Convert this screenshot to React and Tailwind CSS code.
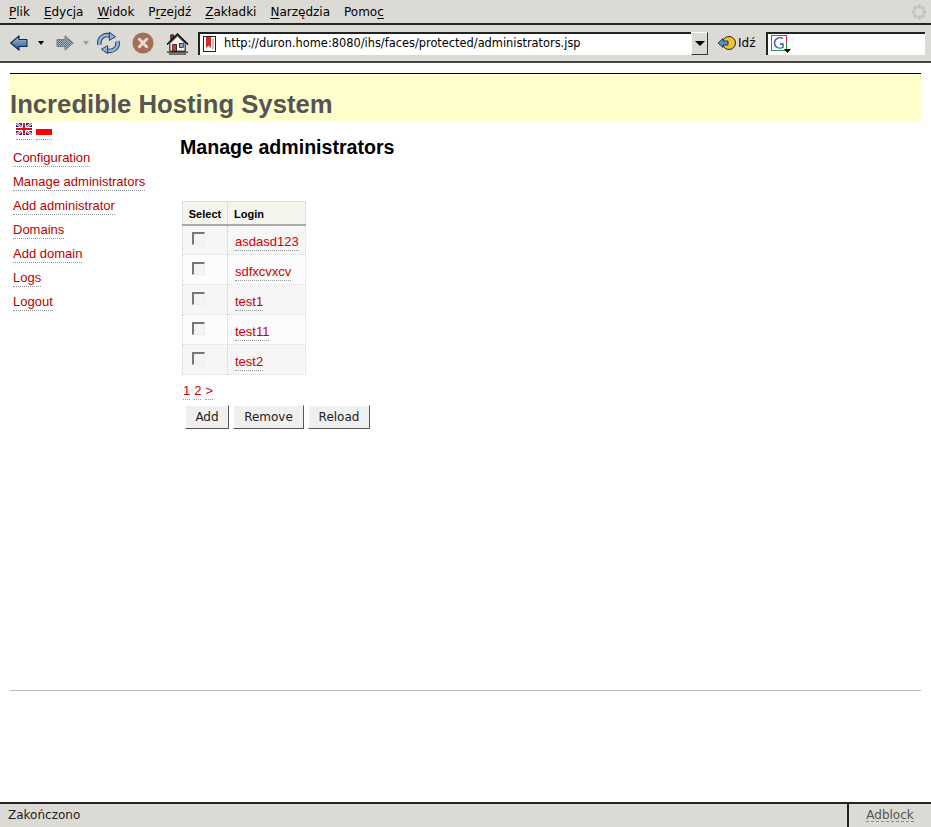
import React from "react";

const uiFont = "font-['DejaVu_Sans',sans-serif]";
const pageFont = "font-['Liberation_Sans',sans-serif]";

const menu = [
  ["P", "lik"],
  ["E", "dycja"],
  ["W", "idok"],
  ["", "P", "rzejdź"],
  ["Z", "akładki"],
  ["N", "arzędzia"],
  ["", "Pomo", "c"],
];

const sideLinks = [
  "Configuration",
  "Manage administrators",
  "Add administrator",
  "Domains",
  "Add domain",
  "Logs",
  "Logout",
];

const logins = ["asdasd123", "sdfxcvxcv", "test1", "test11", "test2"];

function MenuItem({ parts }) {
  if (parts.length === 2) {
    return (
      <span>
        <span className="underline underline-offset-2">{parts[0]}</span>
        {parts[1]}
      </span>
    );
  }
  if (parts[1] === "P") {
    return (
      <span>
        P<span className="underline underline-offset-2">r</span>zejdź
      </span>
    );
  }
  return (
    <span>
      {parts[1]}
      <span className="underline underline-offset-2">{parts[2]}</span>
    </span>
  );
}

function BackIcon() {
  return (
    <svg width="18" height="16" viewBox="0 0 18 16" className="shrink-0">
      <defs>
        <linearGradient id="back" x1="0" y1="0" x2="0" y2="1">
          <stop offset="0" stopColor="#a9c6e4" />
          <stop offset="1" stopColor="#20548c" />
        </linearGradient>
      </defs>
      <path d="M0.7 8 L9 0.8 V4.5 H17 V11.5 H9 V15.2 Z" fill="url(#back)" stroke="#0b2a4c" strokeWidth="1.1" strokeLinejoin="round" />
    </svg>
  );
}

function ForwardIcon() {
  return (
    <svg width="18" height="16" viewBox="0 0 18 16" className="shrink-0">
      <defs>
        <pattern id="dither" width="2" height="2" patternUnits="userSpaceOnUse">
          <rect width="2" height="2" fill="#a9b4c2" />
          <rect width="1" height="1" fill="#5f6c7c" />
          <rect x="1" y="1" width="1" height="1" fill="#5f6c7c" />
        </pattern>
      </defs>
      <path d="M17.3 8 L9 0.8 V4.5 H1 V11.5 H9 V15.2 Z" fill="url(#dither)" stroke="#77808c" strokeWidth="1" strokeLinejoin="round" />
    </svg>
  );
}

function ReloadIcon() {
  return (
    <svg width="23" height="24" viewBox="0 0 26 26" fill="none" className="shrink-0">
      <path d="M3 15 C1 7 9 2 16 5" stroke="#16324f" strokeWidth="5" />
      <path d="M3 15 C1 7 9 2 16 5" stroke="#8db4dc" strokeWidth="3" />
      <path d="M14 1 L21 6 L14 10 Z" fill="#8db4dc" stroke="#16324f" />
      <path d="M23 11 C25 19 17 24 10 21" stroke="#16324f" strokeWidth="5" />
      <path d="M23 11 C25 19 17 24 10 21" stroke="#8db4dc" strokeWidth="3" />
      <path d="M12 25 L5 20 L12 16 Z" fill="#8db4dc" stroke="#16324f" />
    </svg>
  );
}

function StopIcon() {
  return (
    <svg width="22" height="22" viewBox="0 0 24 24" className="shrink-0">
      <defs>
        <pattern id="stopDither" width="2" height="2" patternUnits="userSpaceOnUse">
          <rect width="2" height="2" fill="#c2927c" />
          <rect width="1" height="1" fill="#8a4a34" />
          <rect x="1" y="1" width="1" height="1" fill="#8a4a34" />
        </pattern>
      </defs>
      <circle cx="12" cy="12" r="11.5" fill="url(#stopDither)" />
      <path d="M8 8 L16 16 M16 8 L8 16" stroke="#e8dcd6" strokeWidth="3.2" strokeLinecap="round" />
    </svg>
  );
}

function HomeIcon() {
  return (
    <svg width="23" height="23" viewBox="0 0 24 24" className="shrink-0">
      <path d="M5 3 h3 v5 h-3 Z" fill="#b03020" stroke="#000" strokeWidth="0.8" />
      <path d="M1 13 L12 2 L23 13" fill="#d8d4cc" stroke="#000" strokeWidth="1.4" />
      <path d="M4 12 L12 4 L20 12 V20 H4 Z" fill="#f4f2ec" stroke="#000" strokeWidth="1" />
      <rect x="7" y="13" width="4" height="7" fill="#d03a2c" stroke="#000" strokeWidth="0.7" />
      <rect x="14" y="12" width="4" height="4" fill="#8aa8c8" stroke="#000" strokeWidth="0.7" />
      <path d="M1 21 H23 M3 23 H21" stroke="#000" strokeWidth="1" />
    </svg>
  );
}

function PageIcon() {
  return (
    <svg width="14" height="16" viewBox="0 0 14 16" className="shrink-0">
      <rect x="0.5" y="0.5" width="12" height="15" fill="#fff" stroke="#222" />
      <path d="M3 1 H8 V12 L5.5 9.5 L3 12 Z" fill="#d62a20" />
      <path d="M10 3 V13" stroke="#888" />
    </svg>
  );
}

function GoIcon() {
  return (
    <svg width="20" height="16" viewBox="0 0 20 16" className="shrink-0">
      <circle cx="12" cy="8" r="6.5" fill="#f0c430" stroke="#222" />
      <path d="M1 8 L6 3.5 V6 H11 V10 H6 V12.5 Z" fill="#5a90c4" stroke="#12304f" strokeWidth="0.9" strokeLinejoin="round" />
    </svg>
  );
}

function GoogleIcon() {
  return (
    <svg width="22" height="19" viewBox="0 0 22 19" className="shrink-0">
      <rect x="0.5" y="0.5" width="15" height="15" fill="#fff" stroke="#2f9a3c" />
      <path d="M0.5 15.5 V0.5 H8" fill="none" stroke="#2f6fd0" />
      <path d="M8 0.5 H15.5 V8" fill="none" stroke="#c8342c" />
      <path d="M12 3.5 C8 1.5 3.5 3.5 3.5 8 C3.5 12.5 8 14 12 12.5 V9 H9" fill="none" stroke="#2456c8" strokeWidth="1.3" />
      <path d="M13 14 H20 L16.5 18 Z" fill="#000" />
    </svg>
  );
}

function Throbber() {
  return (
    <svg width="16" height="16" viewBox="0 0 16 16" fill="#c4c2bd">
      <circle cx="8" cy="2.5" r="1.9" />
      <circle cx="8" cy="13.5" r="1.9" />
      <circle cx="2.5" cy="8" r="1.9" />
      <circle cx="13.5" cy="8" r="1.9" />
      <circle cx="4" cy="4" r="1.9" />
      <circle cx="12" cy="4" r="1.9" />
      <circle cx="4" cy="12" r="1.9" />
      <circle cx="12" cy="12" r="1.9" />
    </svg>
  );
}

function Caret({ grey }) {
  return <span className={`shrink-0 w-0 h-0 border-x-[3.5px] border-x-transparent border-t-[4px] ${grey ? "border-t-[#9a9a9a]" : "border-t-black"}`} />;
}

function UkFlag() {
  return (
    <svg width="16" height="12" viewBox="0 0 16 12" className="block">
      <rect width="16" height="12" fill="#1c2a80" />
      <path d="M0 0 L16 12 M16 0 L0 12" stroke="#fff" strokeWidth="2.4" />
      <path d="M0 0 L16 12 M16 0 L0 12" stroke="#d01020" strokeWidth="0.8" />
      <path d="M8 0 V12 M0 6 H16" stroke="#fff" strokeWidth="4" />
      <path d="M8 0 V12 M0 6 H16" stroke="#d01020" strokeWidth="2" />
    </svg>
  );
}

function Checkbox() {
  return <span className="block w-[13px] h-[13px] bg-[#f4f4f4] border-t-2 border-l-2 border-t-[#777] border-l-[#777] border-r border-b border-r-[#eee] border-b-[#eee]" />;
}

function PageButton({ label, width }) {
  return (
    <button className={`h-[24px] ${width} bg-[#efefef] border-r border-b border-r-[#555] border-b-[#555] border-t border-l border-t-white border-l-white text-[12px] text-[#222] ${uiFont}`}>
      {label}
    </button>
  );
}

export default function App() {
  return (
    <div className="w-[931px] h-[827px] flex flex-col overflow-hidden bg-white">
      {/* menu bar */}
      <div className={`h-[25px] shrink-0 bg-[#dcdad5] border-b-2 border-[#222] flex items-center justify-between pl-[9px] pr-[4px] text-[12px] text-black ${uiFont}`}>
        <div className="flex gap-[14px]">
          {menu.map((parts) => (
            <MenuItem key={parts.join("")} parts={parts} />
          ))}
        </div>
        <Throbber />
      </div>

      {/* toolbar */}
      <div className={`h-[38px] shrink-0 bg-[#dcdad5] border-b-2 border-[#444] flex items-center pl-[10px] text-[12px] text-black ${uiFont}`}>
        <BackIcon />
        <span className="ml-[10px] flex"><Caret /></span>
        <span className="ml-[12px] flex"><ForwardIcon /></span>
        <span className="ml-[9px] flex"><Caret grey /></span>
        <span className="ml-[8px] flex"><ReloadIcon /></span>
        <span className="ml-[12px] flex"><StopIcon /></span>
        <span className="ml-[12px] flex"><HomeIcon /></span>
        <div className="ml-[9px] shrink-0 w-[493px] h-[23px] flex items-center bg-white border-t-2 border-l-2 border-[#222] border-r-0 border-b-0 pl-[3px]">
          <PageIcon />
          <span className="ml-[7px] text-[11.4px] text-black">http://duron.home:8080/ihs/faces/protected/administrators.jsp</span>
        </div>
        <span className="shrink-0 w-[17px] h-[23px] bg-[#dcdad5] border border-white border-r-[#333] border-b-[#333] flex items-center justify-center">
          <span className="w-0 h-0 border-x-[5px] border-x-transparent border-t-[5px] border-t-black" />
        </span>
        <span className="ml-[9px] flex"><GoIcon /></span>
        <span className="ml-[1px] w-[18px] shrink-0">Idź</span>
        <div className="ml-[10px] shrink-0 w-[159px] h-[23px] flex items-center bg-white border-t-2 border-l-2 border-[#222] pl-[3px]">
          <GoogleIcon />
        </div>
      </div>

      {/* page */}
      <div className={`flex-1 flex flex-col px-[10px] pt-[10px] ${pageFont}`}>
        <div className="h-[49px] shrink-0 bg-[#ffffcc] border-t border-black flex items-end">
          <h1 className="text-[25.7px] leading-[30px] font-bold text-[#555] pb-[3px]">Incredible Hosting System</h1>
        </div>

        <div className="h-[569px] shrink-0 border-b border-[#bbb] flex">
          <div className="w-[170px] shrink-0 pl-[3px] pt-[1px]">
            <div className="flex gap-[4px] pl-[3px] h-[23px]">
              <span className="h-[17px] border-b border-dotted border-[#999]"><UkFlag /></span>
              <span className="h-[17px] border-b border-dotted border-[#999]">
                <span className="block w-[16px] h-[12px]">
                  <span className="block h-[6px] bg-white" />
                  <span className="block h-[6px] bg-[#ff0000]" />
                </span>
              </span>
            </div>
            <div className="flex flex-col items-start">
              {sideLinks.map((l) => (
                <a key={l} className="h-[24px] leading-[24px] text-[13px] text-[#bb0000]">
                  <span className="border-b border-dotted border-[#999] pb-[1px]">{l}</span>
                </a>
              ))}
            </div>
          </div>

          <div className="pt-[13px]">
            <h2 className="text-[19.6px] leading-[24px] font-bold text-black">Manage administrators</h2>

            <table className="mt-[42px] ml-[2px] border-collapse text-[12px]">
              <thead>
                <tr className="h-[23px] bg-[#f5f5ee]">
                  <th className="w-[45px] p-0 pt-[2px] text-[11px] font-bold text-black border border-[#ddd] border-b-2 border-b-[#aaa]">Select</th>
                  <th className="w-[78px] p-0 pt-[2px] pl-[6px] text-left text-[11px] font-bold text-black border border-[#ddd] border-b-2 border-b-[#aaa]">Login</th>
                </tr>
              </thead>
              <tbody>
                {logins.map((login, i) => (
                  <tr key={login} className={`h-[30px] ${i % 2 === 0 ? "bg-[#f6f6f6]" : "bg-[#fcfcfc]"}`}>
                    <td className="p-0 pl-[9px] pb-[3px] border-l border-dotted border-l-[#ccc] border-b border-b-[#ddd]">
                      <Checkbox />
                    </td>
                    <td className="p-0 pl-[7px] border-l border-dotted border-l-[#ccc] border-r border-r-[#ddd] border-b border-b-[#ddd] border-r-solid">
                      <span className="text-[13px] text-[#cc0000] border-b border-dotted border-[#999] pb-[1px] relative top-[2px]">{login}</span>
                    </td>
                  </tr>
                ))}
              </tbody>
            </table>

            <div className="mt-[8px] ml-[3px] flex gap-[4px] text-[13px] leading-[15px] text-[#cc0000]">
              <span className="border-b border-dotted border-[#999] pb-[1px]">1</span>
              <span className="border-b border-dotted border-[#999] pb-[1px]">2</span>
              <span className="border-b border-dotted border-[#999] pb-[1px]">&gt;</span>
            </div>

            <div className="mt-[5px] ml-[5px] flex gap-[4px]">
              <PageButton label="Add" width="w-[44px]" />
              <PageButton label="Remove" width="w-[71px]" />
              <PageButton label="Reload" width="w-[62px]" />
            </div>
          </div>
        </div>
        <div className="flex-1" />
      </div>

      {/* status bar */}
      <div className={`h-[25px] shrink-0 bg-[#dcdad5] border-t-2 border-[#222] flex text-[12px] text-[#222] ${uiFont}`}>
        <div className="flex-1 pl-[8px] leading-[22px]">Zakończono</div>
        <div className="w-[84px] border-l-2 border-[#222] flex justify-center leading-[22px]">
          <span className="h-[18px] border-b border-dashed border-[#888] text-[#555]">Adblock</span>
        </div>
      </div>
    </div>
  );
}
